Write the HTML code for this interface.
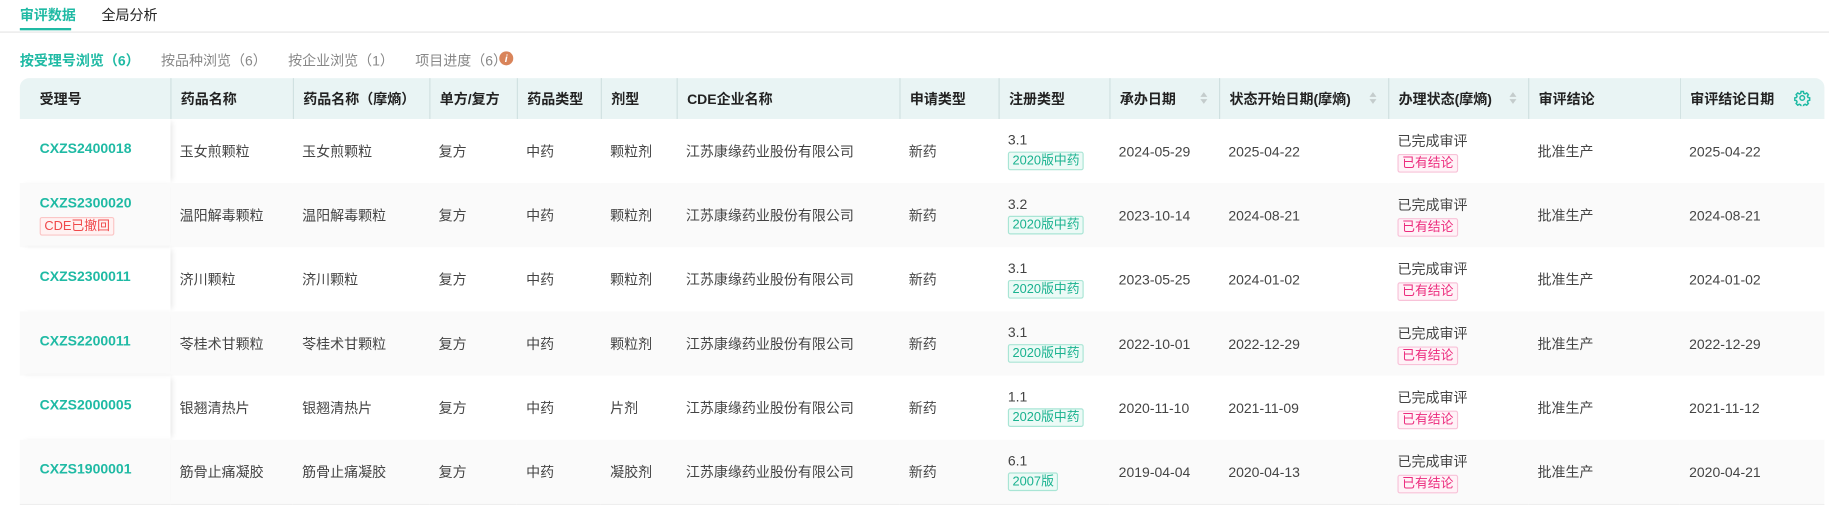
<!DOCTYPE html>
<html><head><meta charset="utf-8"><style>
html,body{margin:0;padding:0;background:#fff;width:1829px;height:505px;overflow:hidden}
#w{position:absolute;left:0;top:0;width:1568px;height:433px;transform:scale(1.1665);transform-origin:0 0;font-family:"Liberation Sans","Noto Sans CJK SC",sans-serif;font-size:12px;color:#333}
.abs{position:absolute;white-space:nowrap}
.teal{color:#1fbaa4}
table{position:absolute;left:17px;top:67px;width:1547px;border-collapse:separate;border-spacing:0;table-layout:fixed}
th{height:35px;background:#e9f4f4;text-align:left;font-weight:bold;padding:0 0 0 8px;border-left:1px solid #cfe0e0;color:#222;position:relative;font-size:12px}
th:first-child{border-left:none;padding-left:17px;border-top-left-radius:8px}
th:last-child{border-top-right-radius:8px}
td{height:55px;padding:0 0 0 8px;vertical-align:middle;font-size:12px;color:#444;white-space:nowrap}
td:first-child{padding-left:17px;box-shadow:3px 0 5px -2px rgba(0,0,0,.12)}
tr.alt td{background:#fafafa}
tbody tr:last-child td{border-bottom:1px solid #eee}
.code{color:#1fbaa4;font-weight:bold;display:block;margin-top:-5px}
.tag{display:inline-block;font-size:11px;line-height:14px;padding:0 3px;border:1px solid;border-radius:2px;margin-top:3px}
.g{color:#19b28f;border-color:#a9e5d5;background:#ecfaf6}
.p{color:#ec2b7d;border-color:#f8c2d8;background:#fff2f7}
.r{color:#f0484a;border-color:#fbc6c6;background:#fff2f2}
.sort{position:absolute;right:10px;top:12px;width:6px}
.sort:before{content:"";position:absolute;left:0;top:0;border:3.5px solid transparent;border-bottom:4px solid #c4cccc;border-top:none}
.sort:after{content:"";position:absolute;left:0;top:6px;border:3.5px solid transparent;border-top:4px solid #c4cccc;border-bottom:none}
</style></head><body><div id="w">
<div class="abs teal" style="left:17px;top:4px;font-weight:bold">审评数据</div>
<div class="abs" style="left:17px;top:24px;width:44px;height:2px;background:#1fbaa4"></div>
<div class="abs" style="left:87px;top:4px;color:#222">全局分析</div>
<div class="abs" style="left:0;top:27px;width:1568px;height:1px;background:#e6e6e6"></div>
<div class="abs teal" style="left:17px;top:43px;font-weight:bold">按受理号浏览（6）</div>
<div class="abs" style="left:138px;top:43px;color:#888">按品种浏览（6）</div>
<div class="abs" style="left:247px;top:43px;color:#888">按企业浏览（1）</div>
<div class="abs" style="left:356px;top:43px;color:#888">项目进度（6）</div>
<div class="abs" style="left:428px;top:44px;width:12px;height:12px;border-radius:50%;background:#d9845a;color:#fff;font-size:9px;line-height:12px;text-align:center;font-style:italic;font-weight:bold">i</div>
<table>
<colgroup><col style="width:129px"><col style="width:105px"><col style="width:117px"><col style="width:75px"><col style="width:72px"><col style="width:65px"><col style="width:191px"><col style="width:85px"><col style="width:95px"><col style="width:94px"><col style="width:145px"><col style="width:120px"><col style="width:130px"><col style="width:124px"></colgroup>
<thead><tr><th>受理号</th><th>药品名称</th><th>药品名称（摩熵）</th><th>单方/复方</th><th>药品类型</th><th>剂型</th><th>CDE企业名称</th><th>申请类型</th><th>注册类型</th><th>承办日期<span class="sort"></span></th><th>状态开始日期(摩熵)<span class="sort"></span></th><th>办理状态(摩熵)<span class="sort"></span></th><th>审评结论</th><th>审评结论日期<svg style="position:absolute;right:12px;top:10px" width="14" height="14" viewBox="0 0 24 24" fill="none" stroke="#1fbaa4" stroke-width="2.2"><circle cx="12" cy="12" r="3.4"/><path d="M10.3 2.5h3.4l.6 2.6 2 .9 2.3-1.4 2.4 2.4-1.4 2.3.9 2 2.6.6v3.4l-2.6.6-.9 2 1.4 2.3-2.4 2.4-2.3-1.4-2 .9-.6 2.6h-3.4l-.6-2.6-2-.9-2.3 1.4-2.4-2.4 1.4-2.3-.9-2-2.6-.6v-3.4l2.6-.6.9-2-1.4-2.3 2.4-2.4 2.3 1.4 2-.9z"/></svg></th></tr></thead>
<tbody>
<tr><td><span class="code">CXZS2400018</span></td><td>玉女煎颗粒</td><td>玉女煎颗粒</td><td>复方</td><td>中药</td><td>颗粒剂</td><td>江苏康缘药业股份有限公司</td><td>新药</td><td>3.1<br><span class="tag g">2020版中药</span></td><td>2024-05-29</td><td>2025-04-22</td><td>已完成审评<br><span class="tag p">已有结论</span></td><td>批准生产</td><td>2025-04-22</td></tr>
<tr class="alt"><td><span class="code" style="margin-top:0">CXZS2300020</span><span class="tag r" style="margin-top:5px">CDE已撤回</span></td><td>温阳解毒颗粒</td><td>温阳解毒颗粒</td><td>复方</td><td>中药</td><td>颗粒剂</td><td>江苏康缘药业股份有限公司</td><td>新药</td><td>3.2<br><span class="tag g">2020版中药</span></td><td>2023-10-14</td><td>2024-08-21</td><td>已完成审评<br><span class="tag p">已有结论</span></td><td>批准生产</td><td>2024-08-21</td></tr>
<tr><td><span class="code">CXZS2300011</span></td><td>济川颗粒</td><td>济川颗粒</td><td>复方</td><td>中药</td><td>颗粒剂</td><td>江苏康缘药业股份有限公司</td><td>新药</td><td>3.1<br><span class="tag g">2020版中药</span></td><td>2023-05-25</td><td>2024-01-02</td><td>已完成审评<br><span class="tag p">已有结论</span></td><td>批准生产</td><td>2024-01-02</td></tr>
<tr class="alt"><td><span class="code">CXZS2200011</span></td><td>苓桂术甘颗粒</td><td>苓桂术甘颗粒</td><td>复方</td><td>中药</td><td>颗粒剂</td><td>江苏康缘药业股份有限公司</td><td>新药</td><td>3.1<br><span class="tag g">2020版中药</span></td><td>2022-10-01</td><td>2022-12-29</td><td>已完成审评<br><span class="tag p">已有结论</span></td><td>批准生产</td><td>2022-12-29</td></tr>
<tr><td><span class="code">CXZS2000005</span></td><td>银翘清热片</td><td>银翘清热片</td><td>复方</td><td>中药</td><td>片剂</td><td>江苏康缘药业股份有限公司</td><td>新药</td><td>1.1<br><span class="tag g">2020版中药</span></td><td>2020-11-10</td><td>2021-11-09</td><td>已完成审评<br><span class="tag p">已有结论</span></td><td>批准生产</td><td>2021-11-12</td></tr>
<tr class="alt"><td><span class="code">CXZS1900001</span></td><td>筋骨止痛凝胶</td><td>筋骨止痛凝胶</td><td>复方</td><td>中药</td><td>凝胶剂</td><td>江苏康缘药业股份有限公司</td><td>新药</td><td>6.1<br><span class="tag g">2007版</span></td><td>2019-04-04</td><td>2020-04-13</td><td>已完成审评<br><span class="tag p">已有结论</span></td><td>批准生产</td><td>2020-04-21</td></tr>
</tbody></table>
</div></body></html>
